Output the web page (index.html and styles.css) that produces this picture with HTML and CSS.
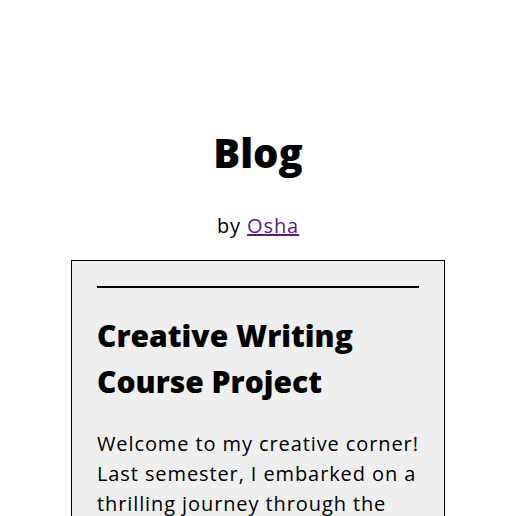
FILE: index.html
```html
<!DOCTYPE html>
<html>
<head>
<meta charset="utf-8">
<link rel="stylesheet" href="styles.css">
</head>
<body>
<header class="site-header">
  <h1 class="site-title">Blog</h1>
  <p class="byline">by <a href="#" class="author">Osha</a></p>
</header>
<main class="post">
  <hr class="rule">
  <h2 class="post-title">Creative Writing Course Project</h2>
  <p class="post-body">Welcome to my creative corner! Last semester, I embarked on a thrilling journey through the world of creative writing, exploring stories and poems.</p>
</main>
</body>
</html>
```
FILE: styles.css
```css
body {
  margin: 0;
  padding: 0 8px;
  font-family: "Open Sans", sans-serif;
  color: #000;
  background: #fff;
}
.site-header {
  text-align: center;
  padding-top: 125px;
}
.site-title {
  margin: 0;
  font-size: 40px;
  font-weight: 800;
  line-height: 56px;
}
.byline {
  margin: 30px 0 0;
  font-size: 20px;
  line-height: 30px;
  letter-spacing: 0.9px;
}
.author {
  color: #551a8b;
}
.post {
  width: 322px;
  margin: 19px auto 0;
  padding: 25px;
  background: #efefef;
  border: 1px solid #000;
}
.rule {
  margin: 0;
  border: 0;
  border-top: 2px solid #000;
}
.post-title {
  margin: 25px 0 0;
  font-size: 30px;
  font-weight: 800;
  line-height: 46px;
}
.post-body {
  margin: 24px 0 0;
  font-size: 20px;
  line-height: 30px;
  letter-spacing: 0.9px;
}
```
